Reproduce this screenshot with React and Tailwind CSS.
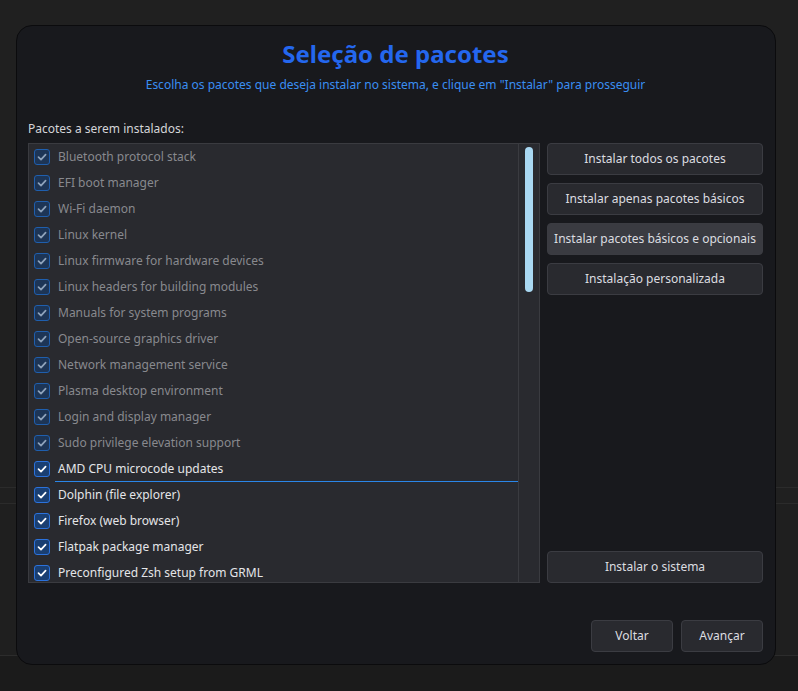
const pacotes = [
  { name: 'Bluetooth protocol stack', fixo: true },
  { name: 'EFI boot manager', fixo: true },
  { name: 'Wi-Fi daemon', fixo: true },
  { name: 'Linux kernel', fixo: true },
  { name: 'Linux firmware for hardware devices', fixo: true },
  { name: 'Linux headers for building modules', fixo: true },
  { name: 'Manuals for system programs', fixo: true },
  { name: 'Open-source graphics driver', fixo: true },
  { name: 'Network management service', fixo: true },
  { name: 'Plasma desktop environment', fixo: true },
  { name: 'Login and display manager', fixo: true },
  { name: 'Sudo privilege elevation support', fixo: true },
  { name: 'AMD CPU microcode updates', foco: true },
  { name: 'Dolphin (file explorer)' },
  { name: 'Firefox (web browser)' },
  { name: 'Flatpak package manager' },
  { name: 'Preconfigured Zsh setup from GRML' },
]

function Check({ fixo }) {
  return (
    <span
      className={
        fixo
          ? 'flex h-[16px] w-[16px] shrink-0 items-center justify-center rounded-[3px] border border-[#1f5fae] bg-[#1d3556]'
          : 'flex h-[16px] w-[16px] shrink-0 items-center justify-center rounded-[3px] border border-[#2b72dc] bg-[#1a3f72]'
      }
    >
      <svg width="12" height="12" viewBox="0 0 12 12" fill="none">
        <polyline
          points="2.5,6.2 5,8.6 9.6,3.6"
          stroke={fixo ? '#8fa3bb' : '#ffffff'}
          strokeWidth="1.7"
          strokeLinecap="round"
          strokeLinejoin="round"
        />
      </svg>
    </span>
  )
}

function Botao({ children, className = '' }) {
  return (
    <button
      className={
        'flex h-[32px] items-center justify-center rounded-[4px] border border-[#3b3c42] text-[12px] text-[#dcdde0] ' +
        className
      }
    >
      {children}
    </button>
  )
}

export default function App() {
  return (
    <div className="relative h-[691px] w-[798px] overflow-hidden font-['Noto_Sans',sans-serif]">
      {/* janela de fundo */}
      <div className="flex h-full flex-col">
        <div className="h-[488px] border-b border-[#2b2b2b] bg-[#202020]" />
        <div className="h-[16px] border-b border-[#2b2b2b] bg-[#202020]" />
        <div className="h-[152px] border-b border-[#2c2c2c] bg-[#1f1f1f]" />
        <div className="flex-1 bg-[#1b1b1b]" />
      </div>

      <div className="absolute left-[16px] top-[25px] flex h-[640px] w-[760px] flex-col rounded-[16px] border border-[#0b0b0d] bg-[#18191d] pb-[12px] pl-[11px] pr-[12px] pt-[12px]">
        <h1 className="text-center text-[24px] font-bold leading-[32px] text-[#2467ee]">Seleção de pacotes</h1>
        <p className="mt-[6px] text-center text-[12px] leading-[18px] text-[#3a8ef2]">
          Escolha os pacotes que deseja instalar no sistema, e clique em "Instalar" para prosseguir
        </p>
        <p className="mt-[26px] text-[12px] leading-[18px] text-[#d4d5d8]">Pacotes a serem instalados:</p>

        <div className="mt-[5px] flex gap-[7px]">
          <div className="flex h-[440px] w-[512px] border border-[#3a3b40] bg-[#292a2f]">
            <div className="flex-1 pl-[5px]">
              {pacotes.map(p => (
                <div key={p.name} className="flex h-[26px] items-center gap-[5px]">
                  <Check fixo={p.fixo} />
                  {p.foco ? (
                    <span className="flex h-[26px] flex-1 flex-col">
                      <span className="flex flex-1 items-center pl-[3px] pt-[1px] text-[12px] text-[#e4e5e8]">{p.name}</span>
                      <span className="h-[1px] bg-[#2a86e8]" />
                    </span>
                  ) : (
                    <span className={p.fixo ? 'pl-[3px] text-[12px] text-[#88898e]' : 'pl-[3px] text-[12px] text-[#e4e5e8]'}>
                      {p.name}
                    </span>
                  )}
                </div>
              ))}
            </div>
            <div className="flex w-[21px] justify-center border-l border-[#3a3b40] pt-[3px]">
              <div className="h-[145px] w-[8px] rounded-full bg-[#a9d8f2]" />
            </div>
          </div>

          <div className="flex w-[216px] flex-col">
            <div className="flex flex-col gap-[8px]">
              <Botao className="bg-[#292a2f]">Instalar todos os pacotes</Botao>
              <Botao className="bg-[#292a2f]">Instalar apenas pacotes básicos</Botao>
              <Botao className="bg-[#3a3b41]">Instalar pacotes básicos e opcionais</Botao>
              <Botao className="bg-[#292a2f]">Instalação personalizada</Botao>
            </div>
            <div className="flex-1" />
            <Botao className="bg-[#292a2f]">Instalar o sistema</Botao>
          </div>
        </div>

        <div className="flex-1" />
        <div className="flex justify-end gap-[8px]">
          <Botao className="w-[82px] bg-[#292a2f]">Voltar</Botao>
          <Botao className="w-[82px] bg-[#292a2f]">Avançar</Botao>
        </div>
      </div>
    </div>
  )
}
